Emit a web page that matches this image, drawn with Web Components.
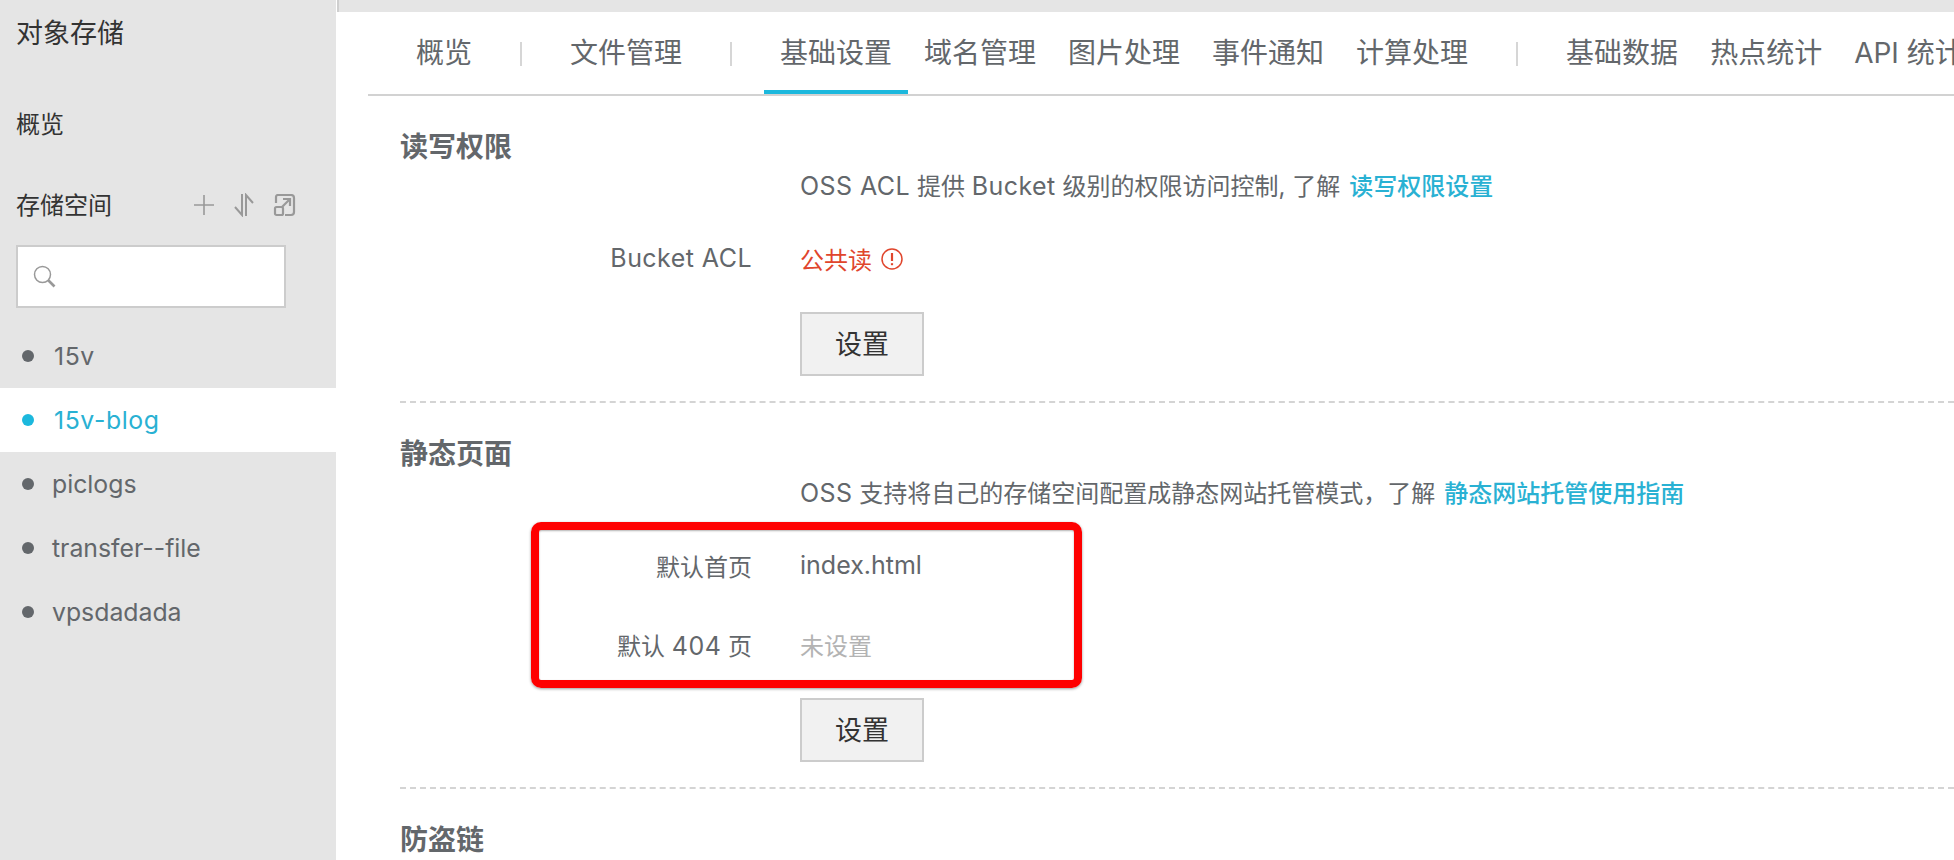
<!DOCTYPE html>
<html lang="zh">
<head>
<meta charset="utf-8">
<title>对象存储</title>
<style>
  html, body { margin: 0; height: 100%; overflow: hidden; background: #fff; }
  body { font-family: Inter, "Noto Sans CJK SC", sans-serif; color: #63676b; font-size: 24px; }
  .en { font-size: 25px; line-height: 1; letter-spacing: .45px; }
</style>
</head>
<body>
<oss-app>
  <oss-sidebar slot="sidebar"></oss-sidebar>
  <oss-tabs slot="tabs"></oss-tabs>
  <oss-section heading="读写权限">
    <oss-desc link="读写权限设置"><span class="en">OSS ACL</span> 提供 <span class="en">Bucket</span> 级别的权限访问控制, 了解</oss-desc>
    <oss-field first><span slot="label" class="en">Bucket ACL</span><span style="color:#e0452c">公共读</span><oss-warn></oss-warn></oss-field>
    <oss-button>设置</oss-button>
  </oss-section>
  <oss-section heading="静态页面">
    <oss-desc link="静态网站托管使用指南"><span class="en">OSS</span> 支持将自己的存储空间配置成静态网站托管模式，了解</oss-desc>
    <oss-field first><span slot="label">默认首页</span><span style="font-size:25px;padding-bottom:2px">index.html</span></oss-field>
    <oss-field><span slot="label">默认 <span class="en">404</span> 页</span><span style="color:#b3b3b3">未设置</span></oss-field>
    <oss-button>设置</oss-button>
  </oss-section>
  <oss-section heading="防盗链"></oss-section>
  <oss-callout></oss-callout>
</oss-app>

<script>
class OssApp extends HTMLElement {
  constructor() {
    super();
    this.attachShadow({ mode: 'open' });
    this.shadowRoot.innerHTML = `
      <style>
        :host { display: flex; position: relative; width: 1954px; height: 860px; overflow: hidden; }
        .side { flex: 0 0 336px; background: #e5e5e5; }
        .main { flex: 1; min-width: 0; }
        .top { height: 12px; background: #e5e5e5; border-left: 2px solid #cfcfcf; margin-left: 1px; }
        .wrap { padding-left: 32px; }
        .content { padding-left: 32px; }
      </style>
      <div class="side"><slot name="sidebar"></slot></div>
      <div class="main">
        <div class="top"></div>
        <div class="wrap">
          <slot name="tabs"></slot>
          <div class="content"><slot></slot></div>
        </div>
      </div>
    `;
  }
}

class OssSidebar extends HTMLElement {
  constructor() {
    super();
    this.attachShadow({ mode: 'open' });
    const buckets = ['15v', '15v-blog', 'piclogs', 'transfer--file', 'vpsdadada'];
    const rows = buckets.map((name) => `
      <div class="bucket ${name === '15v-blog' ? 'bucket--active' : ''}"><i></i><span class="${/^\d/.test(name) ? 'num' : ''}">${name}</span></div>
    `).join('');
    this.shadowRoot.innerHTML = `
      <style>
        :host { display: block; }
        .title { font-size: 27px; line-height: 40px; color: #333; padding: 14px 0 0 16px; }
        .link { font-size: 24px; line-height: 40px; color: #333; margin: 51px 0 0 16px; }
        .head { display: flex; align-items: center; height: 40px; margin: 40px 0 0 16px; color: #333; }
        .head span { width: 177px; padding-bottom: 4px; }
        .head svg { display: block; flex: none; fill: none; stroke: #999; }
        .search { box-sizing: border-box; width: 270px; height: 63px; margin: 20px 0 16px 16px; background: #fff;
          border: 2px solid #ccc; display: flex; align-items: center; padding-left: 15px; }
        .bucket { display: flex; align-items: center; height: 64px; padding-left: 22px; color: #63676b; font-size: 24.8px; }
        .bucket i { width: 12px; height: 12px; border-radius: 50%; background: currentColor; margin-right: 18px; }
        .bucket .num { margin-left: 2px; letter-spacing: .6px; }
        .bucket--active { background: #fff; color: #29b1d3; }
        .bucket--active i { background: #1cb8dd; }
      </style>
      <div class="title">对象存储</div>
      <div class="link">概览</div>
      <div class="head">
        <span>存储空间</span>
        <svg width="22" height="22" viewBox="0 0 22 22" stroke-width="1.6"><path d="M1 11h20M11 1v20"/></svg>
        <svg style="margin-left:19px" width="20" height="24" viewBox="0 0 20 24" stroke-width="2"><path d="M8 1v21L1 14M12 23V2l7 8"/></svg>
        <svg style="margin-left:19px" width="23" height="23" viewBox="0 0 23 23" stroke-width="2.2"><path d="M3 9V3a2 2 0 0 1 2-2h13a3 3 0 0 1 3 3v14a3 3 0 0 1-3 3h-6"/><rect x="2" y="13" width="8" height="8" rx="1.5"/><path d="M9 13l8-8M10 5h7v7"/></svg>
      </div>
      <div class="search">
        <svg width="23" height="23" viewBox="0 0 23 23" fill="none" stroke="#999"><circle cx="9.5" cy="9.5" r="8" stroke-width="1.5"/><path d="M15 15l6.500 6.500" stroke-width="2.600"/></svg>
      </div>
      ${rows}
    `;
  }
}

class OssTabs extends HTMLElement {
  constructor() {
    super();
    this.attachShadow({ mode: 'open' });
    const groups = [
      ['概览'],
      ['文件管理'],
      ['基础设置', '域名管理', '图片处理', '事件通知', '计算处理'],
      ['基础数据', '热点统计', 'API 统计']
    ];
    const html = groups.map((group) => group.map((t) => `
      <div class="tab ${t === '基础设置' ? 'tab--active' : ''}">${t}</div>
    `).join('')).join('<div class="sep"></div>');
    this.shadowRoot.innerHTML = `
      <style>
        :host { display: block; }
        .bar { display: flex; height: 82px; border-bottom: 2px solid #d2d2d2; padding-left: 32px; overflow: hidden; white-space: nowrap; }
        .tab { flex: none; box-sizing: border-box; height: 84px; padding: 21px 16px 0; font-size: 28px; line-height: 40px; border-bottom: 6px solid transparent; }
        .tab--active { border-bottom-color: #1cb8dd; }
        .sep { flex: none; width: 2px; height: 24px; margin: 30px 32px 0 32px; background: #d6d6d6; }
      </style>
      <div class="bar">${html}</div>
    `;
  }
}

class OssSection extends HTMLElement {
  constructor() {
    super();
    this.attachShadow({ mode: 'open' });
    this.shadowRoot.innerHTML = `
      <style>
        :host { display: block; border-bottom: 2px dashed #d4d4d4; padding-bottom: 25px; }
        :host(:last-of-type) { border-bottom: 0; }
        h2 { margin: 0; padding-top: 31px; font-size: 28px; line-height: 40px; font-weight: 700; color: #63676b; }
      </style>
      <h2></h2>
      <slot></slot>
    `;
  }

  connectedCallback() {
    this.shadowRoot.querySelector('h2').textContent = this.getAttribute('heading');
  }
}

class OssDesc extends HTMLElement {
  constructor() {
    super();
    this.attachShadow({ mode: 'open' });
    this.shadowRoot.innerHTML = `
      <style>
        :host { display: block; margin-left: 400px; line-height: 40px; white-space: nowrap; }
        a { color: #29b1d3; font-weight: 500; margin-left: 9px; }
      </style>
      <slot></slot><a></a>
    `;
  }

  connectedCallback() {
    this.shadowRoot.querySelector('a').textContent = this.getAttribute('link');
  }
}

class OssField extends HTMLElement {
  constructor() {
    super();
    this.attachShadow({ mode: 'open' });
    this.shadowRoot.innerHTML = `
      <style>
        :host { display: grid; grid-template-columns: 352px 1fr; column-gap: 48px; align-items: center; box-sizing: border-box; height: 64px; padding-bottom: 5px; margin-top: 15px; }
        :host([first]) { margin-top: 22px; }
        .label { text-align: right; }
        .value { display: flex; align-items: center; gap: 9px; }
      </style>
      <div class="label"><slot name="label"></slot></div>
      <div class="value"><slot></slot></div>
    `;
  }
}

class OssWarn extends HTMLElement {
  constructor() {
    super();
    this.attachShadow({ mode: 'open' });
    this.shadowRoot.innerHTML = `
      <style>:host { display: block; width: 22px; height: 22px; } svg { display: block; }</style>
      <svg width="22" height="22" viewBox="0 0 22 22" fill="none" stroke="#e0452c">
        <circle cx="11" cy="11" r="10" stroke-width="1.5"/>
        <path d="M11 5v8" stroke-width="2.200"/>
        <path d="M11 15.200v2" stroke-width="2.200"/>
      </svg>
    `;
  }
}

class OssButton extends HTMLElement {
  constructor() {
    super();
    this.attachShadow({ mode: 'open' });
    this.shadowRoot.innerHTML = `
      <style>
        :host { display: block; margin: 19px 0 0 400px; }
        button { display: block; box-sizing: border-box; width: 124px; height: 64px; padding: 0 0 4px; background: #f1f1f1;
          border: 2px solid #ccc; border-radius: 0; color: #333; font: inherit; font-size: 27px; }
      </style>
      <button><slot></slot></button>
    `;
  }
}

// red annotation drawn on top of the screenshot, sits over the form rows
class OssCallout extends HTMLElement {
  constructor() {
    super();
    this.attachShadow({ mode: 'open' });
    this.shadowRoot.innerHTML = `
      <style>
        :host { display: block; position: absolute; left: 531px; top: 522px; width: 551px; height: 166px; box-sizing: border-box;
          border: 8px solid #fe0000; border-radius: 10px; box-shadow: 0 1px 3px rgba(0,0,0,.4), inset 0 1px 2px rgba(0,0,0,.3); }
      </style>
    `;
  }
}

customElements.define('oss-app', OssApp);
customElements.define('oss-sidebar', OssSidebar);
customElements.define('oss-tabs', OssTabs);
customElements.define('oss-section', OssSection);
customElements.define('oss-desc', OssDesc);
customElements.define('oss-field', OssField);
customElements.define('oss-warn', OssWarn);
customElements.define('oss-button', OssButton);
customElements.define('oss-callout', OssCallout);
</script>
</body>
</html>
